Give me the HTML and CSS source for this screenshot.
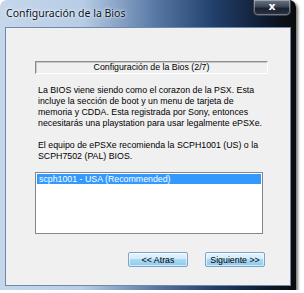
FILE: index.html
```html
<!DOCTYPE html>
<html>
<head>
<meta charset="utf-8">
<link rel="stylesheet" href="styles.css">
</head>
<body>
<div class="window">
  <div class="titlebar">
    <span class="title">Configuración de la Bios</span>
    <div class="close"><span>x</span></div>
  </div>
  <div class="client">
    <div class="header">Configuración de la Bios (2/7)</div>
    <p class="para">La BIOS viene siendo como el corazon de la PSX. Esta<br>incluye la sección de boot y un menu de tarjeta de<br>memoria y CDDA. Esta registrada por Sony, entonces<br>necesitarás una playstation para usar legalmente ePSXe.</p>
    <p class="para second">El equipo de ePSXe recomienda la SCPH1001 (US) o la<br>SCPH7502 (PAL) BIOS.</p>
    <div class="listbox">
      <div class="item selected">scph1001 - USA (Recommended)</div>
    </div>
    <div class="buttons">
      <button class="btn">&lt;&lt; Atras</button>
      <button class="btn">Siguiente &gt;&gt;</button>
    </div>
  </div>
</div>
</body>
</html>
```
FILE: styles.css
```css
html, body {
  margin: 0;
  padding: 0;
  background: #ffffff;
}
.window {
  position: relative;
  width: 296px;
  height: 290px;
  box-sizing: border-box;
  border-radius: 7px 7px 0 0;
  background: linear-gradient(90deg, #c6d7eb 0%, #b7cce6 28%, #5a7aa6 52%, #22406c 72%, #0e1a2e 90%, #0a0a0a 100%);
  padding: 0 5px 4px 5px;
  display: flex;
  flex-direction: column;
  box-shadow: 2px 2px 3px rgba(0,0,0,0.55);
}
.titlebar {
  height: 27px;
  display: flex;
  align-items: center;
  flex: none;
}
.title {
  font-family: "Noto Sans", "DejaVu Sans", sans-serif;
  font-size: 10.5px;
  color: #081424;
  padding-left: 1px;
  margin-top: -1px;
  text-shadow: 0 0 4px rgba(255,255,255,0.9), 0 0 2px rgba(255,255,255,0.8);
}
.close {
  position: absolute;
  top: 0;
  right: 5px;
  width: 38px;
  height: 16px;
  box-sizing: border-box;
  border: 1px solid #3a3f48;
  border-top: none;
  border-radius: 0 0 5px 5px;
  background: linear-gradient(180deg, #6b7686 0%, #3b4554 45%, #1a2130 55%, #2a3444 100%);
  box-shadow: inset 0 0 0 1px rgba(255,255,255,0.35);
  display: flex;
  align-items: center;
  justify-content: center;
}
.close span {
  font-family: "DejaVu Sans", sans-serif;
  font-weight: bold;
  font-size: 11px;
  color: #ffffff;
  line-height: 1;
  margin-top: -2px;
}
.client {
  flex: 1;
  background: #f0f0f0;
  border: 1px solid #6f89ad;
  padding: 33px 22px 0 29px;
  font-family: "Liberation Sans", Arial, sans-serif;
  font-size: 8.8px;
  color: #000;
}
.header {
  height: 13px;
  box-sizing: border-box;
  border-top: 1px solid #8c8c8c;
  border-left: 1px solid #8c8c8c;
  border-bottom: 1px solid #ffffff;
  border-right: 1px solid #ffffff;
  box-shadow: inset 1px 1px 0 #c8c8c8;
  text-align: center;
  line-height: 11px;
}
.para {
  margin: 11px 0 0 3px;
  line-height: 11px;
}
.para.second {
  margin-top: 10.5px;
}
.listbox {
  margin-top: 10.5px;
  width: 228px;
  height: 62px;
  box-sizing: border-box;
  border: 1px solid #82878f;
  background: #ffffff;
  padding: 1px;
}
.item {
  height: 10px;
  line-height: 10px;
  padding-left: 2px;
}
.item.selected {
  background: #3399ff;
  color: #ffffff;
}
.buttons {
  margin-top: 18px;
  width: 230px;
  display: flex;
  justify-content: flex-end;
  gap: 17px;
}
.btn {
  width: 60px;
  height: 15px;
  padding: 0;
  box-sizing: border-box;
  font-family: "Liberation Sans", Arial, sans-serif;
  font-size: 8.8px;
  color: #000;
  border: 1px solid #7ea3c8;
  border-radius: 2px;
  background: linear-gradient(180deg, #e6f4fc 0%, #d2ebfa 45%, #a9daf5 50%, #8fcaed 100%);
  box-shadow: inset 0 0 0 1px rgba(255,255,255,0.6);
}
```
